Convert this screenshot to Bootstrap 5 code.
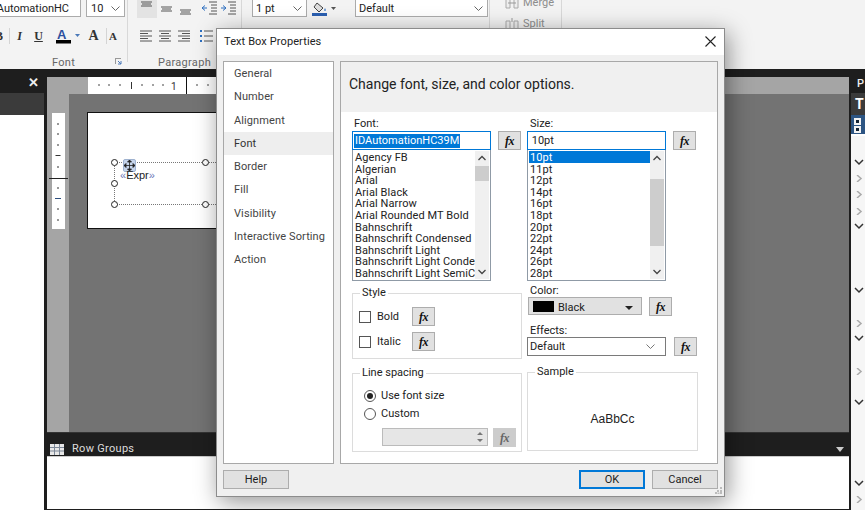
<!DOCTYPE html>
<html lang="en">
<head>
<meta charset="utf-8">
<title>Text Box Properties</title>
<link href="https://cdn.jsdelivr.net/npm/bootstrap@5.3.0/dist/css/bootstrap.min.css" rel="stylesheet">
<style>
html,body{margin:0;background:#fff;overflow:hidden}
body{font:11px/14px Roboto,sans-serif;color:#222;width:865px;height:523px}
.app{width:865px;height:510px;position:relative;overflow:hidden}
.ribbon{height:69px;background:#f3f3f3}
.rgroup{height:62px;border-right:1px solid #d8d8d8;position:relative;flex:none}
.rg-font{width:128px}.rg-para{width:114px}.rg-border{width:248px}.rg-merge{width:72px}
.rlabel{position:absolute;left:0;right:0;bottom:-8px;text-align:center;color:#666;line-height:14px;letter-spacing:.3px}
.launcher{position:absolute;right:5px;bottom:-3px}
.rrow1{height:17px}.rrow2{height:16px;margin-top:11px}
.rcombo{height:18px;margin-top:-1px;border:1px solid #ababab;background:#fff;flex:none;overflow:hidden;line-height:15px;white-space:nowrap;color:#222;padding-left:3px}
.rc-font{width:81px;border-left:0;padding:0 4px 0 0;justify-content:flex-end;gap:7px}
.rc-size{width:39px;margin-left:5px;padding:0 4px}
.rc-pt{width:55px;margin-left:10px;padding-right:4px}
.rc-def{width:133px;padding-right:4px}
.rico{width:19px;height:17px;flex:none;display:block}
.ricob{font:700 12px/16px "Liberation Serif",serif;text-align:center;color:#333}
.rsep{width:1px;height:16px;background:#d4d4d4;flex:none}
.mtext{color:#8d8d8d;line-height:14px}
.workspace{height:441px;background:#1e1e1e}
.lpanel{width:44px;flex:none;background:#fff}
.lp-title{height:24px;background:#1e1e1e;color:#eee;font:700 13px/28px "Liberation Sans",sans-serif;text-align:right;padding-right:5px}
.lp-sub{height:22px;background:#3b3b3b}
.center{width:802px;flex:none;margin-left:3px}
.ctop{height:8px;background:#1e1e1e}
.rulerbar{height:17px;background:#a5a5a5;padding-left:41px}
.hruler{width:400px;height:17px;background:#fff;position:relative}
.hruler svg{display:block}
.canvas{height:339px;background:#737373;border-bottom:1px solid #333}
.vstrip{width:22px;flex:none;background:#a5a5a5;padding:19px 0 0 5px}
.vruler{width:13px;height:116px;background:#fff;position:relative}
.cmain{flex:1;padding:18px 0 0 18px}
.rptpage{width:300px;height:117px;background:#fff;border:1px solid #111;position:relative}
.selbox{position:absolute;left:26px;top:49px;width:260px;height:43px;border:1px dotted #777;border-right:0}
.hnd{position:absolute;width:7px;height:7px;border:1px solid #222;border-radius:50%;background:#fff}
.mover{position:absolute;left:8px;top:-4px;width:13px;height:13px;background:#c6d5ec;border:1px solid #9fb2cf;border-radius:2px}
.expr{position:absolute;left:5px;top:5px;font:11px/14px "Liberation Sans",sans-serif;color:#222}
.expr span{color:#6a78b8}
.rowbar{height:23px;background:#1e1e1e;color:#ddd;padding:9px 0 0 3px;gap:8px;line-height:14px;letter-spacing:.3px}
.rowtail{margin-left:auto;margin-right:5px}
.rowwhite{height:53px;background:#fff;border-top:1px solid #ccc}
.rpanel{flex:1;margin-left:2px;background:#f6f6f6}
.rp-a{height:24px;background:#1e1e1e;color:#eee;padding-left:6px;font-weight:500;line-height:30px}
.rp-b{height:22px;background:#3b3b3b;color:#fff;padding-left:4px;font:700 14px/22px Roboto,sans-serif}
.rp-c{height:21px;background:#2d5583;padding:3px 0 0 3px;border-bottom:2px solid #fff}
.rp-dot{width:7px;height:7px;background:#f3f3f3;border:2px solid #f3f3f3;margin-bottom:1px}
.rp-dot i{display:block;width:3px;height:3px;background:#123}
.chevs{position:relative}
.chev{position:absolute;left:3px;width:10px;height:7px}
.dlg{position:absolute;left:216px;top:28px;width:509px;height:469px;background:#f0f0f0;border:1px solid #8c8c8c;box-shadow:3px 5px 22px rgba(0,0,0,.42);font-size:11px;color:#222}
.dtitle{height:26px;background:#fff;padding:0 0 0 7px;line-height:26px;color:#222;font-size:11px;letter-spacing:.1px}
.dclose{margin-left:auto;margin-right:8px;display:block;margin-top:7px}
.dbody{height:409px;padding:6px 6px 0 6px;gap:6px;background:#f0f0f0}
.dnav{width:111px;height:403px;flex:none;background:#fff;border:1px solid #a8a8a8;border-radius:0;display:block}
.dnav .list-group-item{border:0;border-radius:0;height:23.25px;padding:0 0 0 10px;line-height:23px;font-size:11px;color:#444;background:transparent;letter-spacing:.1px}
.dnav .list-group-item.active{background:#eee;color:#333;margin:0}
.dpane{width:378px;height:403px;flex:none;background:#fff;border:1px solid #a8a8a8}
.dhead{height:50px;background:#f0f0f0;padding:0 0 0 8px;font-size:14px;line-height:44px;color:#222}
.dform{padding:6px 0 0 11px;gap:5px}
.colL{width:170px;flex:none}
.colR{width:170px;flex:none}
.flabel{height:11px;line-height:11px;padding-left:2px;margin-bottom:2px;font-size:11px}
.flabel2{padding-left:3px}
.fxbtn{width:23px;height:19px;flex:none;background:#e1e1e1;border:1px solid #adadad;border-radius:0;padding:0;font:italic 700 12px/16px "Liberation Serif",serif;color:#111;letter-spacing:-.5px}
.fxbtn:disabled{background:#ccc;border-color:#ccc;color:#666;opacity:1}
.ftext{width:139px;height:19px;flex:none;border:1px solid #0078d7;background:#fff;padding:1px 1px 0;line-height:16px;margin-right:7px;font-size:11px}
.seltxt{background:#0078d7;color:#fff;display:inline-block;line-height:14px;padding:0 1px}
.lbox{width:139px;height:131px;border:1px solid #8f9aa6;border-top:0;background:#fff;position:relative;overflow:hidden;padding:1px 0 0 1px}
.lrow{height:11.6px;line-height:14px;white-space:nowrap;width:121px;overflow-x:clip;padding-left:1px;font-size:11px;letter-spacing:.1px}
.lrow.on{background:#0078d7;color:#fff}
.sbar{position:absolute;right:1px;top:1px;width:14px;height:128px;background:#f0f0f0}
.sthumb{position:absolute;left:0;width:14px;background:#cdcdcd}
.sarr{position:absolute;left:3px}
.gbox{border:1px solid #dcdcdc;position:relative;background:#fff}
.glegend{position:absolute;left:7px;top:-7px;background:#fff;padding:0 2px;line-height:12px;font-size:11px}
.gstyle{width:170px;height:66px;margin-top:12px}
.gline{width:170px;height:79px;margin-top:14px}
.gsample{width:171px;height:79px}
.cbrow{position:absolute;left:6px;height:19px;gap:6px;line-height:19px}
.cbox{width:12px;height:12px;border:1px solid #555;background:#fff;flex:none}
.cblabel{width:29px}
.radrow{position:absolute;left:11px;gap:5px;height:14px;line-height:14px}
.rad{width:12px;height:12px;border:1px solid #555;border-radius:50%;background:#fff;flex:none;position:relative}
.rad.on::after{content:"";position:absolute;left:2px;top:2px;width:6px;height:6px;border-radius:50%;background:#222}
.spinbox{position:absolute;left:29px;top:54px;width:106px;height:18px;background:#e6e6e6;border:1px solid #bbb}
.spinfx{position:absolute;left:140px;top:54px}
.sampletxt{font:12px/1 "Liberation Sans",sans-serif;color:#222;padding-top:15px}
.colorsel{width:114px;height:18px;background:#e1e1e1;border:1px solid #adadad;padding:3px 0 0 4px;gap:4px;margin-left:1px;margin-right:7px}
.swatch{width:21px;height:11px;background:#000;flex:none;margin-top:-3px}
.efsel{width:139px;height:19px;background:#fff;border:1px solid #7a7a7a;padding:0 2px;margin-right:8px;font-size:11px}
.cRow2{margin-top:-1px}
.dfoot{height:32px;padding:6px 6px 0 6px;gap:7px;background:#f0f0f0;position:relative}
.dbtn{width:66px;height:19px;background:#e1e1e1;border:1px solid #adadad;border-radius:0;padding:0;font:11px/16px Roboto,sans-serif;color:#222}
.dbtn.dflt{border:2px solid #0078d7;line-height:15px}
.grip{position:absolute;right:2px;bottom:2px}
</style>
</head>
<body>
<div class="app">
  <div class="ribbon d-flex">
    <div class="rgroup rg-font">
      <div class="d-flex rrow1">
        <div class="rcombo rc-font d-flex align-items-center"><span>AutomationHC</span><svg class="flex-none" width="9" height="5" viewBox="0 0 9 5"><path d="M.5.500l4 4 4-4" fill="none" stroke="#666"/></svg></div>
        <div class="rcombo rc-size d-flex align-items-center justify-content-between"><span>10</span><svg width="9" height="5" viewBox="0 0 9 5"><path d="M.5.500l4 4 4-4" fill="none" stroke="#666"/></svg></div>
      </div>
      <div class="d-flex align-items-center rrow2">
        <span class="ricob" style="width:3px;overflow:hidden;direction:rtl">B</span>
        <span class="rsep" style="margin-left:6px"></span>
        <span class="ricob rico" style="font-style:italic">I</span>
        <span class="ricob rico" style="text-decoration:underline">U</span>
        <svg class="ms-2" width="24" height="16" viewBox="0 0 24 16"><text x="1" y="11" font-family="Liberation Sans" font-weight="700" font-size="13" fill="#2d4f9e">A</text><rect x="0" y="12" width="15" height="3.500" fill="#000"/><path d="M19 6h5l-2.500 3z" fill="#4a78b8"/></svg>
        <span class="ricob ms-1" style="font-size:14px;width:19px;margin-right:-1px">A</span>
        <span class="rsep ms-1"></span>
        <span class="ricob" style="font-size:11px;width:12px">A</span>
      </div>
      <div class="rlabel">Font</div>
      <svg class="launcher" width="7" height="7" viewBox="0 0 7 7"><path d="M0 .500h6M.500 0v6" stroke="#999"/><path d="M3 3l3 3M6 3v3H3" stroke="#4a78b8" fill="none"/></svg>
    </div>
    <div class="rgroup rg-para">
      <div class="d-flex rrow1" style="padding-left:9px">
        <svg width="20" height="18" viewBox="0 0 20 18"><rect width="20" height="18" fill="#e3e3e3"/><path d="M4 2h11M5 4h9M4 6h11" stroke="#555"/></svg>
        <svg width="19" height="18" viewBox="0 0 19 18"><path d="M4 7h11M5 9h9M4 11h11" stroke="#555"/></svg>
        <svg width="19" height="18" viewBox="0 0 19 18"><path d="M4 10h11M5 12h9M4 14h11" stroke="#555"/></svg>
        <svg class="ms-1" width="20" height="18" viewBox="0 0 20 18"><path d="M10 2h8M12 5h6M12 8h6M12 11h6M10 14h8" stroke="#555"/><path d="M8 8H3l3-2.500M3 8l3 2.500" stroke="#2d6fc0" fill="none"/></svg>
        <svg width="20" height="18" viewBox="0 0 20 18"><path d="M9 2h8M11 5h6M11 8h6M11 11h6M9 14h8" stroke="#555"/><path d="M2 8h5L4 5.500M7 8l-3 2.500" stroke="#2d6fc0" fill="none"/></svg>
      </div>
      <div class="d-flex align-items-center rrow2" style="padding-left:9px">
        <svg width="19" height="16" viewBox="0 0 19 16"><path d="M3 3h12M3 5.500h8M3 8h12M3 10.500h8M3 13h12" stroke="#555"/></svg>
        <svg width="19" height="16" viewBox="0 0 19 16"><path d="M3 3h12M5 5.500h8M3 8h12M5 10.500h8M3 13h12" stroke="#555"/></svg>
        <svg width="19" height="16" viewBox="0 0 19 16"><path d="M3 3h12M7 5.500h8M3 8h12M7 10.500h8M3 13h12" stroke="#555"/></svg>
        <svg class="ms-1" width="19" height="16" viewBox="0 0 19 16"><path d="M6 3h9M6 8h9M6 13h9" stroke="#555"/><path d="M2 3h2M2 8h2M2 13h2" stroke="#2d6fc0" stroke-width="2"/></svg>
      </div>
      <div class="rlabel">Paragraph</div>
    </div>
    <div class="rgroup rg-border">
      <div class="d-flex rrow1">
        <div class="rcombo rc-pt d-flex align-items-center justify-content-between"><span>1 pt</span><svg width="9" height="5" viewBox="0 0 9 5"><path d="M.5.500l4 4 4-4" fill="none" stroke="#666"/></svg></div>
        <svg class="ms-1" width="26" height="17" viewBox="0 0 26 17"><path d="M6 3l6 5-4 4-5-5z" fill="#ddd" stroke="#444"/><path d="M14 8c1 2 1 3 0 3s-1-1 0-3z" fill="#2d6fc0"/><rect x="1" y="13" width="15" height="3" fill="#2a5fb0"/><path d="M20 7h5l-2.500 3z" fill="#555"/></svg>
        <div class="rcombo rc-def d-flex align-items-center justify-content-between" style="margin-left:18px"><span>Default</span><svg width="9" height="5" viewBox="0 0 9 5"><path d="M.5.500l4 4 4-4" fill="none" stroke="#666"/></svg></div>
      </div>
    </div>
    <div class="rgroup rg-merge">
      <div class="d-flex flex-column" style="padding:0 0 0 15px;margin-top:-4px">
        <div class="d-flex align-items-center gap-1 mtext"><svg width="14" height="12" viewBox="0 0 14 12"><path d="M1 1h4v10H1zM9 1h4v10H9z" fill="#eee" stroke="#aaa"/><path d="M3 6h8" stroke="#999"/></svg>Merge</div>
        <div class="d-flex align-items-center gap-1 mtext" style="margin-top:7px"><svg width="14" height="12" viewBox="0 0 14 12"><path d="M1 3h4v9H1zM9 3h4v9H9z" fill="#eee" stroke="#aaa"/><path d="M7 0v4" stroke="#999"/></svg>Split</div>
      </div>
    </div>
  </div>

  <div class="workspace d-flex">
    <div class="lpanel">
      <div class="lp-title">✕</div>
      <div class="lp-sub"></div>
    </div>
    <div class="center">
      <div class="ctop"></div>
      <div class="rulerbar"><div class="hruler">
        <svg width="400" height="17" viewBox="0 0 400 17"><path d="M11 7v2M21 7v2M32 7v2M54 7v2M65 7v2M75 7v2M109 7v2M120 7v2" stroke="#444"/><path d="M43.500 5v7" stroke="#333"/><text x="83" y="12.500" font-family="Roboto" font-size="10" fill="#333">1</text><path d="M98.500 0v17" stroke="#111"/></svg>
      </div></div>
      <div class="canvas d-flex">
        <div class="vstrip"><div class="vruler">
          <svg class="position-absolute" style="left:-3px;top:0;overflow:visible" width="19" height="116" viewBox="0 0 19 116"><path d="M8 11h2M8 21h2M8 32h2M6.500 42.500h5M8 54h2M8 75h2M8 96h2M8 107h2" stroke="#333"/><path d="M6 85.500h6" stroke="#2d4f7e"/><path d="M0 65.500h19" stroke="#222"/></svg>
        </div></div>
        <div class="cmain">
          <div class="rptpage">
            <div class="selbox">
              <span class="hnd" style="left:-4px;top:-4px"></span>
              <span class="hnd" style="left:87px;top:-4px"></span>
              <span class="hnd" style="left:-4px;top:17px"></span>
              <span class="hnd" style="left:-4px;top:38px"></span>
              <span class="hnd" style="left:87px;top:38px"></span>
              <div class="mover"><svg width="11" height="11" viewBox="0 0 11 11" class="d-block"><path d="M5.500 0v11M0 5.500h11M5.500 0l-2 2h4zM5.500 11l-2-2h4zM0 5.500l2-2v4zM11 5.500l-2-2v4z" stroke="#222" stroke-width=".8" fill="#222"/></svg></div>
              <div class="expr"><span>«</span>Expr<span>»</span></div>
            </div>
          </div>
        </div>
      </div>
      <div class="rowbar d-flex align-items-center">
        <svg width="14" height="11" viewBox="0 0 14 11"><rect width="14" height="11" fill="#e8e8e8"/><path d="M0 3.500h14M0 7h14M4.500 0v11M9.500 0v11" stroke="#7c8797"/></svg>
        <span>Row Groups</span>
        <svg class="rowtail" width="8" height="5" viewBox="0 0 8 5"><path d="M0 0h8L4 5z" fill="#ccc"/></svg>
      </div>
      <div class="rowwhite"></div>
    </div>
    <div class="rpanel">
      <div class="rp-a">P</div>
      <div class="rp-b">T</div>
      <div class="rp-c"><div class="rp-dot"><i></i></div><div class="rp-dot"><i></i></div></div>
      <div class="chevs">
        <svg class="chev" style="top:23px" viewBox="0 0 10 7"><path d="M1 1l4 4 4-4" fill="none" stroke="#333" stroke-width="1.500"/></svg>
        <svg class="chev" style="top:39px" viewBox="0 0 10 7"><path d="M3 0l4 3.500L3 7" fill="none" stroke="#aaa" stroke-width="1.500"/></svg>
        <svg class="chev" style="top:55px" viewBox="0 0 10 7"><path d="M3 0l4 3.500L3 7" fill="none" stroke="#aaa" stroke-width="1.500"/></svg>
        <svg class="chev" style="top:72px" viewBox="0 0 10 7"><path d="M3 0l4 3.500L3 7" fill="none" stroke="#aaa" stroke-width="1.500"/></svg>
        <svg class="chev" style="top:87px" viewBox="0 0 10 7"><path d="M1 1l4 4 4-4" fill="none" stroke="#333" stroke-width="1.500"/></svg>
        <svg class="chev" style="top:151px" viewBox="0 0 10 7"><path d="M1 1l4 4 4-4" fill="none" stroke="#333" stroke-width="1.500"/></svg>
        <svg class="chev" style="top:184px" viewBox="0 0 10 7"><path d="M3 0l4 3.500L3 7" fill="none" stroke="#aaa" stroke-width="1.500"/></svg>
        <svg class="chev" style="top:199px" viewBox="0 0 10 7"><path d="M1 1l4 4 4-4" fill="none" stroke="#333" stroke-width="1.500"/></svg>
        <svg class="chev" style="top:232px" viewBox="0 0 10 7"><path d="M3 0l4 3.500L3 7" fill="none" stroke="#aaa" stroke-width="1.500"/></svg>
        <svg class="chev" style="top:263px" viewBox="0 0 10 7"><path d="M1 1l4 4 4-4" fill="none" stroke="#333" stroke-width="1.500"/></svg>
        <svg class="chev" style="top:344px" viewBox="0 0 10 7"><path d="M1 1l4 4 4-4" fill="none" stroke="#333" stroke-width="1.500"/></svg>
        <svg class="chev" style="top:360px" viewBox="0 0 10 7"><path d="M3 0l4 3.500L3 7" fill="none" stroke="#aaa" stroke-width="1.500"/></svg>
      </div>
    </div>
  </div>

  <div class="dlg">
    <div class="dtitle d-flex">
      <span>Text Box Properties</span>
      <svg class="dclose" width="11" height="11" viewBox="0 0 11 11"><path d="M.5.500l10 10M10.500.500l-10 10" stroke="#222" stroke-width="1.100"/></svg>
    </div>
    <div class="dbody d-flex">
      <div class="list-group dnav">
        <div class="list-group-item">General</div>
        <div class="list-group-item">Number</div>
        <div class="list-group-item">Alignment</div>
        <div class="list-group-item active">Font</div>
        <div class="list-group-item">Border</div>
        <div class="list-group-item">Fill</div>
        <div class="list-group-item">Visibility</div>
        <div class="list-group-item">Interactive Sorting</div>
        <div class="list-group-item">Action</div>
      </div>
      <div class="dpane">
        <div class="dhead">Change font, size, and color options.</div>
        <div class="dform d-flex">
          <div class="colL">
            <div class="flabel">Font:</div>
            <div class="d-flex">
              <div class="ftext"><span class="seltxt">IDAutomationHC39M</span></div>
              <button class="btn fxbtn" type="button">fx</button>
            </div>
            <div class="lbox">
              <div class="lrow">Agency FB</div><div class="lrow">Algerian</div><div class="lrow">Arial</div><div class="lrow">Arial Black</div><div class="lrow">Arial Narrow</div><div class="lrow">Arial Rounded MT Bold</div><div class="lrow">Bahnschrift</div><div class="lrow">Bahnschrift Condensed</div><div class="lrow">Bahnschrift Light</div><div class="lrow">Bahnschrift Light Condensed</div><div class="lrow">Bahnschrift Light SemiCondensed</div>
              <div class="sbar"><div class="sthumb" style="top:15px;height:15px"></div>
                <svg class="sarr" style="top:4px" width="8" height="6" viewBox="0 0 8 6"><path d="M.5 5L4 1.500 7.500 5" fill="none" stroke="#444" stroke-width="1.300"/></svg>
                <svg class="sarr" style="top:118px" width="8" height="6" viewBox="0 0 8 6"><path d="M.5 1L4 4.500 7.500 1" fill="none" stroke="#444" stroke-width="1.300"/></svg>
              </div>
            </div>
            <div class="gbox gstyle">
              <span class="glegend">Style</span>
              <div class="cbrow d-flex align-items-center" style="top:13px"><span class="cbox"></span><span class="cblabel">Bold</span><button class="btn fxbtn" type="button">fx</button></div>
              <div class="cbrow d-flex align-items-center" style="top:38px"><span class="cbox"></span><span class="cblabel">Italic</span><button class="btn fxbtn" type="button">fx</button></div>
            </div>
            <div class="gbox gline">
              <span class="glegend">Line spacing</span>
              <div class="radrow d-flex align-items-center" style="top:15px"><span class="rad on"></span><span>Use font size</span></div>
              <div class="radrow d-flex align-items-center" style="top:33px"><span class="rad"></span><span>Custom</span></div>
              <div class="spinbox">
                <svg class="position-absolute" style="right:3px;top:2px" width="8" height="12" viewBox="0 0 8 12"><path d="M1 4l3-3 3 3zM1 8l3 3 3-3z" fill="#777"/></svg>
              </div>
              <button class="btn fxbtn spinfx" type="button" disabled>fx</button>
            </div>
          </div>
          <div class="colR">
            <div class="flabel flabel2">Size:</div>
            <div class="d-flex">
              <div class="ftext">&nbsp;10pt</div>
              <button class="btn fxbtn" type="button">fx</button>
            </div>
            <div class="lbox">
              <div class="lrow on">10pt</div><div class="lrow">11pt</div><div class="lrow">12pt</div><div class="lrow">14pt</div><div class="lrow">16pt</div><div class="lrow">18pt</div><div class="lrow">20pt</div><div class="lrow">22pt</div><div class="lrow">24pt</div><div class="lrow">26pt</div><div class="lrow">28pt</div>
              <div class="sbar"><div class="sthumb" style="top:28px;height:67px"></div>
                <svg class="sarr" style="top:4px" width="8" height="6" viewBox="0 0 8 6"><path d="M.5 5L4 1.500 7.500 5" fill="none" stroke="#444" stroke-width="1.300"/></svg>
                <svg class="sarr" style="top:118px" width="8" height="6" viewBox="0 0 8 6"><path d="M.5 1L4 4.500 7.500 1" fill="none" stroke="#444" stroke-width="1.300"/></svg>
              </div>
            </div>
            <div class="flabel flabel2" style="margin-top:4px">Color:</div>
            <div class="d-flex cRow2">
              <div class="colorsel d-flex align-items-center"><span class="swatch"></span><span>Black</span><svg class="ms-auto me-2" width="8" height="4" viewBox="0 0 8 4"><path d="M0 0h8L4 4z" fill="#222"/></svg></div>
              <button class="btn fxbtn" type="button">fx</button>
            </div>
            <div class="flabel flabel2" style="margin-top:9px">Effects:</div>
            <div class="d-flex cRow2">
              <div class="efsel d-flex align-items-center"><span>Default</span><svg class="ms-auto me-2" width="9" height="5" viewBox="0 0 9 5"><path d="M.5.500L4.500 4.500 8.500.500" fill="none" stroke="#777"/></svg></div>
              <button class="btn fxbtn" type="button">fx</button>
            </div>
            <div class="gbox gsample d-flex align-items-center justify-content-center" style="margin-top:16px">
              <span class="glegend">Sample</span>
              <span class="sampletxt">AaBbCc</span>
            </div>
          </div>
        </div>
      </div>
    </div>
    <div class="dfoot d-flex">
      <button class="btn dbtn" type="button">Help</button>
      <button class="btn dbtn dflt ms-auto" type="button">OK</button>
      <button class="btn dbtn" type="button">Cancel</button>
      <svg class="grip" width="7" height="7" viewBox="0 0 7 7"><path d="M5 0h2v2H5zM2 3h2v2H2zM5 3h2v2H5zM0 5h2v2H0zM2.500 5.500h2v1.500h-2zM5 5h2v2H5z" fill="#bbb"/></svg>
    </div>
  </div>
</div>
<script src="https://cdn.jsdelivr.net/npm/bootstrap@5.3.0/dist/js/bootstrap.bundle.min.js"></script>
</body>
</html>
